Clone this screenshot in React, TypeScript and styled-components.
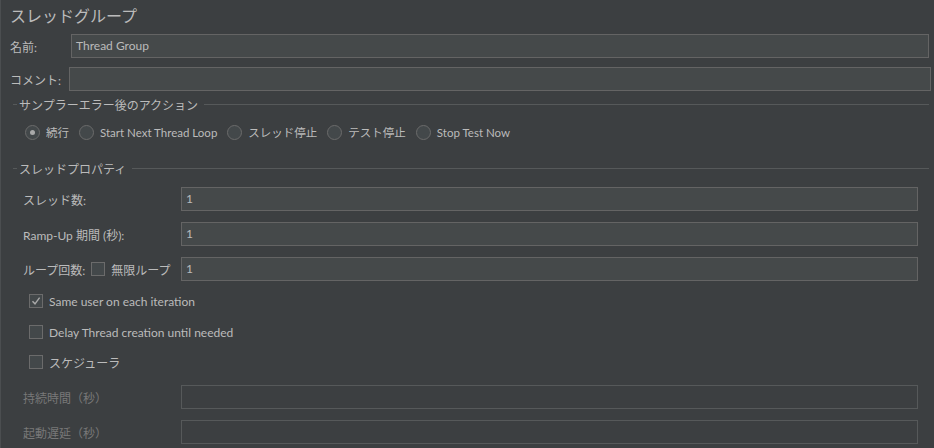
import styled, { createGlobalStyle } from "styled-components";

const GlobalStyle = createGlobalStyle`
  html, body {
    margin: 0;
    padding: 0;
    background: #3c3f41;
  }
  * {
    box-sizing: border-box;
  }
`;

const FONT = `Lato, "Noto Sans CJK JP", sans-serif`;

const Page = styled.div`
  width: 934px;
  height: 448px;
  overflow: hidden;
  background: #3c3f41;
  border-left: 1px solid #4b4e50;
  padding: 5px 0 0 9px;
  font-family: ${FONT};
  font-size: 12px;
  color: #bbbbbb;
  display: flex;
  flex-direction: column;
`;

const Title = styled.div`
  height: 20px;
  line-height: 20px;
  font-size: 16px;
  font-family: "Noto Sans CJK JP", sans-serif;
`;

const FieldRow = styled.div<{ $top: number; $right: number }>`
  display: flex;
  align-items: center;
  height: 24px;
  margin-top: ${(p) => p.$top}px;
  margin-right: ${(p) => p.$right}px;
`;

const Label = styled.div<{ $width: number; $disabled?: boolean }>`
  width: ${(p) => p.$width}px;
  flex: none;
  display: flex;
  align-items: center;
  gap: 6px;
  white-space: nowrap;
  color: ${(p) => (p.$disabled ? "#787878" : "#bbbbbb")};
`;

const Input = styled.div<{ $disabled?: boolean }>`
  flex: 1;
  height: 24px;
  line-height: 22px;
  padding: 0 4px;
  border: 1px solid ${(p) => (p.$disabled ? "#56595a" : "#646464")};
  background: ${(p) => (p.$disabled ? "#3c3f41" : "#45494a")};
  color: #bbbbbb;
`;

const Legend = styled.div<{ $top: number }>`
  display: flex;
  align-items: center;
  height: 14px;
  margin-top: ${(p) => p.$top}px;
  margin-right: 5px;
  padding-left: 3px;
  gap: 2px;
  &::before {
    content: "";
    width: 4px;
    height: 1px;
    background: #56595a;
  }
  &::after {
    content: "";
    flex: 1;
    height: 1px;
    margin-left: 4px;
    background: #56595a;
  }
`;

const RadioGroup = styled.div`
  display: flex;
  align-items: center;
  height: 20px;
  margin-top: 11px;
  padding-left: 15px;
  gap: 10px;
  font-size: 11.5px;
`;

const RadioItem = styled.div`
  display: flex;
  align-items: center;
  gap: 6px;
  white-space: nowrap;
`;

const RadioCircle = styled.span<{ $checked?: boolean }>`
  width: 15px;
  height: 15px;
  border-radius: 50%;
  border: 1px solid #6b6b6b;
  background: #43484a;
  display: flex;
  align-items: center;
  justify-content: center;
  &::after {
    content: "";
    display: ${(p) => (p.$checked ? "block" : "none")};
    width: 5px;
    height: 5px;
    border-radius: 50%;
    background: #a9a9a9;
  }
`;

const Box = styled.span`
  width: 14px;
  height: 14px;
  flex: none;
  border: 1px solid #6b6b6b;
  background: #43484a;
  display: flex;
  align-items: center;
  justify-content: center;
`;

const Props = styled.div`
  display: flex;
  flex-direction: column;
  padding-left: 13px;
  margin-right: 16px;
`;

const CheckRow = styled.div<{ $top: number }>`
  display: flex;
  align-items: center;
  gap: 6px;
  height: 20px;
  margin-top: ${(p) => p.$top}px;
  padding-left: 6px;
`;

const Check = () => (
  <svg width="10" height="10" viewBox="0 0 10 10">
    <path d="M1.5 5.2 L4 7.8 L8.6 1.6" fill="none" stroke="#a9a9a9" strokeWidth="1.4" />
  </svg>
);

const Checkbox = ({ checked }: { checked?: boolean }) => <Box>{checked && <Check />}</Box>;

const radios = ["続行", "Start Next Thread Loop", "スレッド停止", "テスト停止", "Stop Test Now"];

export default function App() {
  return (
    <>
      <GlobalStyle />
      <Page>
        <Title>スレッドグループ</Title>
        <FieldRow $top={9} $right={5}>
          <Label $width={61}>名前:</Label>
          <Input>Thread Group</Input>
        </FieldRow>
        <FieldRow $top={9} $right={3}>
          <Label $width={59}>コメント:</Label>
          <Input />
        </FieldRow>
        <Legend $top={6}>サンプラーエラー後のアクション</Legend>
        <RadioGroup>
          {radios.map((r, i) => (
            <RadioItem key={r}>
              <RadioCircle $checked={i === 0} />
              {r}
            </RadioItem>
          ))}
        </RadioGroup>
        <Legend $top={19}>スレッドプロパティ</Legend>
        <Props>
          <FieldRow $top={12} $right={0}>
            <Label $width={158}>スレッド数:</Label>
            <Input>1</Input>
          </FieldRow>
          <FieldRow $top={11} $right={0}>
            <Label $width={158}>Ramp-Up 期間 (秒):</Label>
            <Input>1</Input>
          </FieldRow>
          <FieldRow $top={11} $right={0}>
            <Label $width={158}>
              ループ回数:
              <Checkbox />
              無限ループ
            </Label>
            <Input>1</Input>
          </FieldRow>
          <CheckRow $top={10}>
            <Checkbox checked />
            Same user on each iteration
          </CheckRow>
          <CheckRow $top={11}>
            <Checkbox />
            Delay Thread creation until needed
          </CheckRow>
          <CheckRow $top={10}>
            <Checkbox />
            スケジューラ
          </CheckRow>
          <FieldRow $top={13} $right={0}>
            <Label $width={158} $disabled>
              持続時間（秒）
            </Label>
            <Input $disabled />
          </FieldRow>
          <FieldRow $top={11} $right={0}>
            <Label $width={158} $disabled>
              起動遅延（秒）
            </Label>
            <Input $disabled />
          </FieldRow>
        </Props>
      </Page>
    </>
  );
}
